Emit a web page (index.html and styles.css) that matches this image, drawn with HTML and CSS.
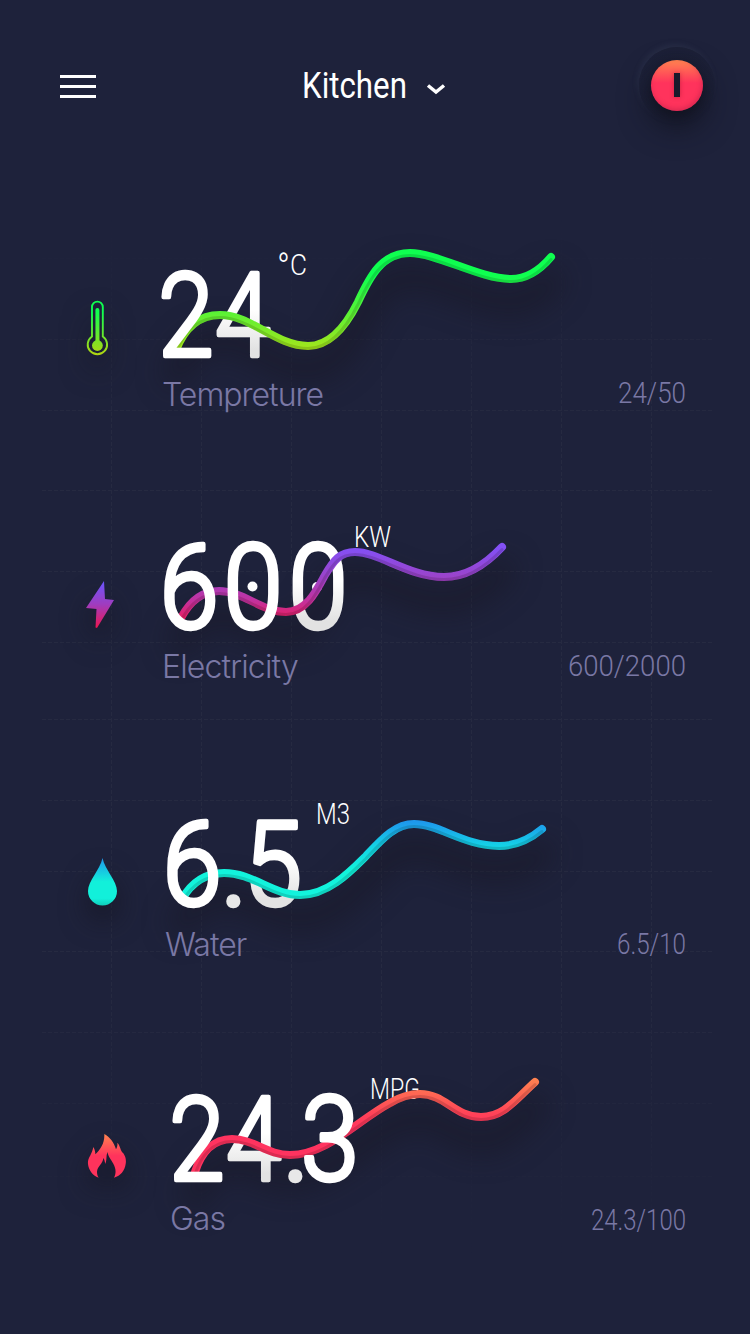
FILE: index.html
```
<!DOCTYPE html>
<html lang="en">
<head>
  <meta charset="UTF-8">
  <title>Kitchen</title>
  <link rel="stylesheet" href="styles.css">
</head>
<body>

  <!-- background grid -->
  <svg class="grid" width="750" height="1334">
    <defs>
      <linearGradient id="fade" x1="0" y1="0" x2="0" y2="1">
        <stop offset="0.16" stop-color="#000"/>
        <stop offset="0.32" stop-color="#fff"/>
        <stop offset="0.74" stop-color="#fff"/>
        <stop offset="0.94" stop-color="#000"/>
      </linearGradient>
      <mask id="fadeMask"><rect width="750" height="1334" fill="url(#fade)"/></mask>
    </defs>
    <g mask="url(#fadeMask)">
      <path d="M111.5 220V1310M201.5 220V1310M291.5 220V1310M381.5 220V1310M471.5 220V1310M561.5 220V1310M651.5 220V1310"/>
      <path d="M42 258.5H712M42 339.5H712M42 410.5H712M42 490.5H712M42 571.5H712M42 642.5H712M42 719.5H712M42 800.5H712M42 871.5H712M42 951.5H712M42 1032.5H712M42 1103.5H712M42 1176.5H712"/>
    </g>
  </svg>

  <div class="header">
    <div class="menu"><span></span><span></span><span></span></div>
    <div class="room">
      <svg class="title" width="106" height="50"><text x="0" y="38" textLength="105" lengthAdjust="spacingAndGlyphs">Kitchen</text></svg>
      <svg class="arrow" width="20" height="12"><path d="M2 2.5L10 9L18 2.5"/></svg>
    </div>
    <div class="power"><div class="knob"><span></span></div></div>
  </div>

  <div class="readings">

    <div class="reading temperature">
      <svg class="icon" viewBox="0 230 155 140">
        <defs>
          <linearGradient id="tempIcon" gradientUnits="userSpaceOnUse" x1="0" y1="301" x2="0" y2="356">
            <stop offset="0.2" stop-color="#0fff50"/><stop offset="1" stop-color="#b5d410"/>
          </linearGradient>
        </defs>
        <g stroke="url(#tempIcon)" fill="none">
          <path d="M92 336.500V307A5.400 5.400 0 0 1 102.800 307V336.500A9.700 9.700 0 1 1 92 336.500Z" stroke-width="1.900"/>
          <path d="M97.400 310L97.500 345" stroke-width="4" stroke-linecap="round"/>
          <circle cx="97.400" cy="345.500" r="5.400" fill="url(#tempIcon)" stroke="none"/>
        </g>
      </svg>
      <svg class="chart" viewBox="155 230 595 140">
        <defs>
          <linearGradient id="tempLine" gradientUnits="userSpaceOnUse" x1="0" y1="275" x2="0" y2="350">
            <stop offset="0" stop-color="#0fff50"/><stop offset="1" stop-color="#a5e51b"/>
          </linearGradient>
          <path id="tempPath" d="M176 350C185 327 200 315 220 315C251 315 276 346 308 346C334 346 350 318 358 302C370 276 382 253 410 253C437 253 480 279 511 279C527 279 540 270 551 257"/>
        </defs>
        <use class="glow" href="#tempPath" y="24"/>
        <text class="unit" x="277" y="275" textLength="30"><tspan font-size="38" dy="6">°</tspan><tspan dy="-6">C</tspan></text>
        <text class="digit back" transform="translate(243 355.500) scale(.86 1)">4</text>
        <use class="line" href="#tempPath" stroke="url(#tempLine)"/>
        <use class="shade" href="#tempPath" y="2.500"/>
        <text class="digit" transform="translate(186 355.500) scale(.86 1)">2</text>
      </svg>
      <div class="caption">
        <span class="label">Tempreture</span>
        <svg class="total" width="130" height="36"><text x="62" y="26" textLength="68">24/50</text></svg>
      </div>
    </div>

    <div class="reading electricity">
      <svg class="icon" viewBox="0 502 155 140">
        <defs>
          <linearGradient id="boltIcon" x1="0" y1="0" x2="0" y2="1">
            <stop offset="0" stop-color="#6b55ff"/><stop offset="0.5" stop-color="#a03cbe"/><stop offset="1" stop-color="#ed1550"/>
          </linearGradient>
        </defs>
        <path d="M104 581L105 599L114 600L97 628L95.500 627.500L96.500 609L86 608Z" fill="url(#boltIcon)"/>
      </svg>
      <svg class="chart" viewBox="155 502 595 140">
        <defs>
          <linearGradient id="elecLine" gradientUnits="userSpaceOnUse" x1="0" y1="548" x2="0" y2="622">
            <stop offset="0" stop-color="#8350f5"/><stop offset="0.4" stop-color="#9c43c9"/><stop offset="0.7" stop-color="#c132a0"/><stop offset="1" stop-color="#ee1b59"/>
          </linearGradient>
          <path id="elecPath" d="M181 618C190 601 203 591 219 591C243 591 262 612 286 612C306 612 316 592 325 575C334 560 340 552 355 552C379 552 409 577 444 577C469 577 488 562 502 547"/>
        </defs>
        <use class="glow" href="#elecPath" y="24"/>
        <text class="unit" x="354" y="547" textLength="37">KW</text>
        <text class="digit back" transform="translate(318 627.500) scale(.92 1)">0</text>
        <circle cx="317" cy="587" r="5" fill="#fff"/>
        <use class="line" href="#elecPath" stroke="url(#elecLine)"/>
        <use class="shade" href="#elecPath" y="2.500"/>
        <text class="digit" transform="translate(189 627.500) scale(.92 1)">6</text>
        <text class="digit" transform="translate(253 627.500) scale(.92 1)">0</text>
        <circle cx="252.500" cy="586.500" r="5" fill="#fff"/>
      </svg>
      <div class="caption">
        <span class="label">Electricity</span>
        <svg class="total" width="130" height="36"><text x="12" y="27" textLength="118">600/2000</text></svg>
      </div>
    </div>

    <div class="reading water">
      <svg class="icon" viewBox="0 780 155 140">
        <defs>
          <linearGradient id="dropIcon" x1="0" y1="0" x2="0" y2="1">
            <stop offset="0" stop-color="#1e96eb"/><stop offset="0.5" stop-color="#12f0da"/><stop offset="0.85" stop-color="#12f0da"/><stop offset="1" stop-color="#10cdbb"/>
          </linearGradient>
        </defs>
        <path d="M102.500 858C105 870 117 881 117 891A14.500 14.500 0 0 1 88 891C88 881 100 870 102.500 858Z" fill="url(#dropIcon)"/>
      </svg>
      <svg class="chart" viewBox="155 780 595 140">
        <defs>
          <linearGradient id="waterLine" gradientUnits="userSpaceOnUse" x1="0" y1="822" x2="0" y2="870">
            <stop offset="0" stop-color="#1e98ec"/><stop offset="0.5" stop-color="#14d2e6"/><stop offset="1" stop-color="#12f3dc"/>
          </linearGradient>
          <path id="waterPath" d="M182 899C192 882 206 873 224 873C253 873 273 895 300 895C328 895 350 872 366 856C382 839 395 824 414 824C439 824 464 846 499 846C517 846 530 839 542 829"/>
        </defs>
        <use class="glow" href="#waterPath" y="24"/>
        <text class="unit" x="316" y="824" textLength="34">M3</text>
        <text class="digit back dot" transform="translate(234 905)">.</text>
        <text class="digit back" transform="translate(273 905) scale(.9 1)">5</text>
        <use class="line" href="#waterPath" stroke="url(#waterLine)"/>
        <use class="shade" href="#waterPath" y="2.500"/>
        <text class="digit" transform="translate(192 905) scale(.92 1)">6</text>
      </svg>
      <div class="caption">
        <span class="label">Water</span>
        <svg class="total" width="130" height="36"><text x="61" y="27" textLength="69">6.5/10</text></svg>
      </div>
    </div>

    <div class="reading gas">
      <svg class="icon" viewBox="0 1054 155 140">
        <defs>
          <linearGradient id="fireIcon" x1="0" y1="0" x2="0" y2="1">
            <stop offset="0" stop-color="#ff8450"/><stop offset="0.5" stop-color="#ff335c"/><stop offset="1" stop-color="#ff335c"/>
          </linearGradient>
        </defs>
        <path transform="translate(60 1060) scale(.3333)" d="M133 222C150 232 162 247 168 268C172 262 173 255 172 248C182 258 180 272 190 280C197 290 199 300 197 312C194 333 182 347 162 353C169 340 168 325 160 311C153 298 146 292 142 276C138 290 141 300 136 312C134 303 133 298 130 294C129 312 112 318 111 335C111 343 113 348 116 353C97 346 86 330 84 312C82 293 96 285 100 261C105 270 106 276 106 283C122 268 134 250 133 222Z" fill="url(#fireIcon)"/>
      </svg>
      <svg class="chart" viewBox="155 1054 595 140">
        <defs>
          <linearGradient id="gasLine" gradientUnits="userSpaceOnUse" x1="0" y1="1078" x2="0" y2="1130">
            <stop offset="0" stop-color="#ff8450"/><stop offset="0.7" stop-color="#ff4158"/><stop offset="1" stop-color="#ff335f"/>
          </linearGradient>
          <path id="gasPath" d="M195 1172C201 1153 213 1139 232 1139C254 1139 267 1155 290 1155C327 1155 358 1120 390 1103C400 1097 409 1094 420 1094C445 1094 455 1117 481 1117C504 1117 516 1099 535 1082"/>
        </defs>
        <use class="glow" href="#gasPath" y="24"/>
        <text class="unit" x="370" y="1099" textLength="50">MPG</text>
        <text class="digit back" transform="translate(254 1179.500) scale(.86 1)">4</text>
        <text class="digit back dot" transform="translate(296 1179.500)">.</text>
        <use class="line" href="#gasPath" stroke="url(#gasLine)"/>
        <use class="shade" href="#gasPath" y="2.500"/>
        <text class="digit" transform="translate(197 1179.500) scale(.86 1)">2</text>
        <text class="digit" transform="translate(330 1179.500) scale(.9 1)">3</text>
      </svg>
      <div class="caption">
        <span class="label">Gas</span>
        <svg class="total" width="130" height="36"><text x="35" y="29" textLength="95">24.3/100</text></svg>
      </div>
    </div>

  </div>

  <!-- shading shared by the digits that sit behind a line -->
  <svg class="shared" width="0" height="0">
    <defs>
      <linearGradient id="backDigit" x1="0" y1="0" x2="0" y2="1">
        <stop offset="0.45" stop-color="#fff"/><stop offset="0.75" stop-color="#e2e2e2"/>
      </linearGradient>
    </defs>
  </svg>

  <script>
    // squeeze the small figures to their own width
    document.querySelectorAll(".unit, .total text").forEach(t => {
      t.setAttribute("lengthAdjust", "spacingAndGlyphs");
    });
  </script>

</body>
</html>
```
FILE: styles.css
```
body {
  margin: 0;
  height: 1334px;
  position: relative;
  overflow: hidden;
  background-color: #1e223b;
  color: #fff;
  font-family: Roboto, sans-serif;
}
.grid {
  position: absolute;
  top: 0;
  left: 0;
  z-index: -1;
}
.grid path {
  stroke: #262a41;
  stroke-dasharray: 4 2;
}
.header {
  display: flex;
  align-items: center;
  justify-content: space-between;
  box-sizing: border-box;
  height: 230px;
  padding: 0 35px 60px 60px;
}
.menu {
  display: flex;
  flex-direction: column;
  gap: 7px;
  width: 36px;
  margin-top: 3px;
}
.menu span {
  height: 3px;
  background-color: #fff;
}
.room {
  display: flex;
  align-items: center;
  gap: 18px;
  margin-left: 12px;
}
.title {
  fill: #fff;
  font-size: 37px;
  overflow: visible;
}
.arrow {
  margin-top: 8px;
  fill: none;
  stroke: #fff;
  stroke-width: 3.5;
}
.power {
  display: flex;
  align-items: center;
  justify-content: center;
  width: 76px;
  height: 76px;
  border-radius: 50%;
  background: linear-gradient(#1c2037, #1e223b);
  box-shadow: -2px -3px 5px rgba(70, 78, 105, 0.22);
}
.knob {
  display: flex;
  align-items: center;
  justify-content: center;
  width: 52px;
  height: 51px;
  border-radius: 50%;
  background: linear-gradient(#ff8450, #ff335c 45%, #ff335c);
  box-shadow: 0 14px 28px 4px rgba(16, 17, 28, 0.7), 0 4px 10px rgba(16, 17, 28, 0.5), inset -1px -2px 5px rgba(150, 20, 60, 0.35);
}
.knob span {
  width: 6px;
  height: 24px;
  background-color: #191a2c;
  box-shadow: 0 0 4px rgba(150, 20, 40, 0.5);
}
.reading {
  display: grid;
  grid-template-columns: 155px 1fr;
  grid-template-rows: 140px 1fr;
}
.temperature {
  height: 272px;
}
.electricity {
  height: 278px;
}
.water {
  height: 274px;
}
.gas {
  height: 274px;
}
.icon,
.chart {
  width: 100%;
  height: 140px;
  overflow: visible;
}
.icon {
  filter: drop-shadow(0 14px 14px rgba(20, 20, 32, 0.8));
}
.line,
.shade,
.glow {
  fill: none;
  stroke-linecap: round;
  stroke-width: 8;
}
.shade {
  stroke: rgba(0, 0, 0, 0.14);
  stroke-width: 3;
}
.glow {
  stroke: rgba(22, 21, 32, 0.45);
  stroke-width: 26;
  filter: blur(14px);
}
.digit {
  fill: #fff;
  stroke: #fff;
  stroke-width: 4.5;
  stroke-linejoin: round;
  font-size: 116px;
  font-weight: 300;
  text-anchor: middle;
}
.digit.back {
  fill: url(#backDigit);
  stroke: url(#backDigit);
}
.digit.back.dot {
  fill: #e8e8e8;
  stroke: #e8e8e8;
}
.unit {
  fill: #fff;
  font-size: 29px;
  font-weight: 300;
}
.caption {
  grid-column: 1 / 3;
  display: flex;
  justify-content: space-between;
  align-items: flex-start;
  padding: 7px 64px 0 162px;
}
.label {
  color: #7a78a5;
  font-family: Inter, sans-serif;
  font-size: 32px;
  font-weight: 300;
  line-height: 36px;
  letter-spacing: -1px;
}
.electricity .label {
  letter-spacing: -0.85px;
}
.water .label {
  margin-left: 3px;
}
.gas .label {
  margin-left: 8px;
}
.total {
  fill: #7a78a5;
  font-size: 30px;
  font-weight: 300;
  overflow: visible;
}
```
